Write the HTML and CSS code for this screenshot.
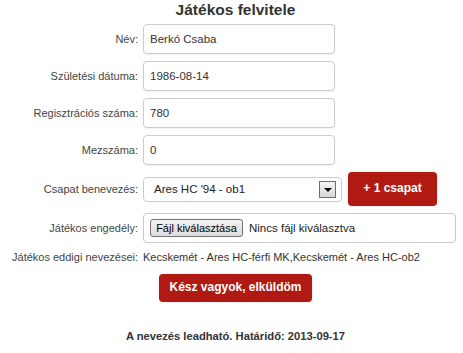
FILE: index.html
```html
<!DOCTYPE html>
<html lang="hu">
<head>
<meta charset="utf-8">
<title>Játékos felvitele</title>
<link rel="stylesheet" href="styles.css">
</head>
<body>
<div class="page">
  <h1 class="title">Játékos felvitele</h1>
  <form class="form">
    <div class="row">
      <label class="label">Név:</label>
      <div class="field"><span class="input">Berkó Csaba</span></div>
    </div>
    <div class="row">
      <label class="label">Születési dátuma:</label>
      <div class="field"><span class="input">1986-08-14</span></div>
    </div>
    <div class="row">
      <label class="label">Regisztrációs száma:</label>
      <div class="field"><span class="input">780</span></div>
    </div>
    <div class="row">
      <label class="label">Mezszáma:</label>
      <div class="field"><span class="input">0</span></div>
    </div>
    <div class="row row-team">
      <label class="label">Csapat benevezés:</label>
      <div class="field field-team">
        <div class="select">
          <span class="select-text">Ares HC '94 - ob1</span>
          <span class="select-arrow"></span>
        </div>
        <button type="button" class="btn btn-add">+ 1 csapat</button>
      </div>
    </div>
    <div class="row">
      <label class="label">Játékos engedély:</label>
      <div class="field">
        <div class="file">
          <span class="file-btn">Fájl kiválasztása</span>
          <span class="file-text">Nincs fájl kiválasztva</span>
        </div>
      </div>
    </div>
    <div class="row row-info">
      <span class="label">Játékos eddigi nevezései:</span>
      <span class="info">Kecskemét - Ares HC-férfi MK,Kecskemét - Ares HC-ob2</span>
    </div>
    <div class="actions">
      <button type="button" class="btn btn-submit">Kész vagyok, elküldöm</button>
    </div>
  </form>
  <p class="footer">A nevezés leadható. Határidő: 2013-09-17</p>
</div>
</body>
</html>
```
FILE: styles.css
```css
* { box-sizing: border-box; }
html, body { margin: 0; padding: 0; background: #fff; }
body {
  font-family: "Liberation Sans", Arial, sans-serif;
  font-size: 11px;
  color: #333;
}
.page { width: 471px; }
.title {
  margin: 0 0 4px;
  font-size: 15.5px;
  line-height: 20px;
  font-weight: bold;
  text-align: center;
  color: #333;
}
.form { display: flex; flex-direction: column; gap: 7px; }
.row {
  display: grid;
  grid-template-columns: 138px 1fr;
  column-gap: 5px;
  align-items: center;
}
.label { text-align: right; color: #444; white-space: nowrap; }
.field { display: flex; align-items: center; }
.input {
  display: flex;
  align-items: center;
  width: 192px;
  height: 30px;
  padding: 0 6px;
  border: 1px solid #ccc;
  border-radius: 4px;
  box-shadow: 0 1px 2px rgba(0,0,0,0.06);
  background: #fff;
  color: #333;
  font-size: 11.5px;
}
.field-team { gap: 6px; }
.select {
  position: relative;
  display: flex;
  align-items: center;
  width: 199px;
  height: 25px;
  padding-left: 10px;
  border: 1px solid #ccc;
  border-radius: 4px;
  background: #fff;
  color: #222;
  font-size: 11.5px;
}
.select-arrow {
  position: absolute;
  right: 5px;
  top: 3px;
  width: 17px;
  height: 17px;
  border: 1px solid #6f6f6f;
  background: linear-gradient(#f4f4f4, #d8d8d8);
}
.select-arrow::after {
  content: "";
  position: absolute;
  left: 4px;
  top: 6px;
  border-left: 4px solid transparent;
  border-right: 4px solid transparent;
  border-top: 4px solid #000;
}
.btn {
  border: 0;
  border-radius: 4px;
  background: #b11a13;
  color: #fff;
  font-family: "Liberation Sans", Arial, sans-serif;
  font-weight: bold;
  cursor: pointer;
  box-shadow: 0 0 3px rgba(0,0,0,0.12);
}
.btn-add {
  width: 89px;
  height: 34px;
  font-size: 12px;
  padding: 0 0 3px;
}
.file {
  display: flex;
  align-items: center;
  gap: 6px;
  width: 313px;
  height: 30px;
  padding: 0 6px;
  border: 1px solid #ccc;
  border-radius: 4px;
  background: #fff;
}
.file-btn {
  display: flex;
  align-items: center;
  justify-content: center;
  width: 93px;
  height: 18px;
  border: 1px solid #707070;
  border-radius: 3px;
  background: linear-gradient(#f2f2f2, #dcdcdc);
  color: #000;
}
.file-text { color: #222; font-size: 11.5px; }
.row-info { margin-top: 1px; }
.info { color: #333; white-space: nowrap; }
.actions {
  display: flex;
  justify-content: center;
  margin-top: 4px;
}
.btn-submit {
  width: 153px;
  height: 28px;
  font-size: 12px;
  padding: 0 0 2px;
}
.footer {
  margin: 27px 0 0;
  text-align: center;
  font-weight: bold;
  font-size: 11.2px;
  line-height: 14px;
  color: #333;
}
```
